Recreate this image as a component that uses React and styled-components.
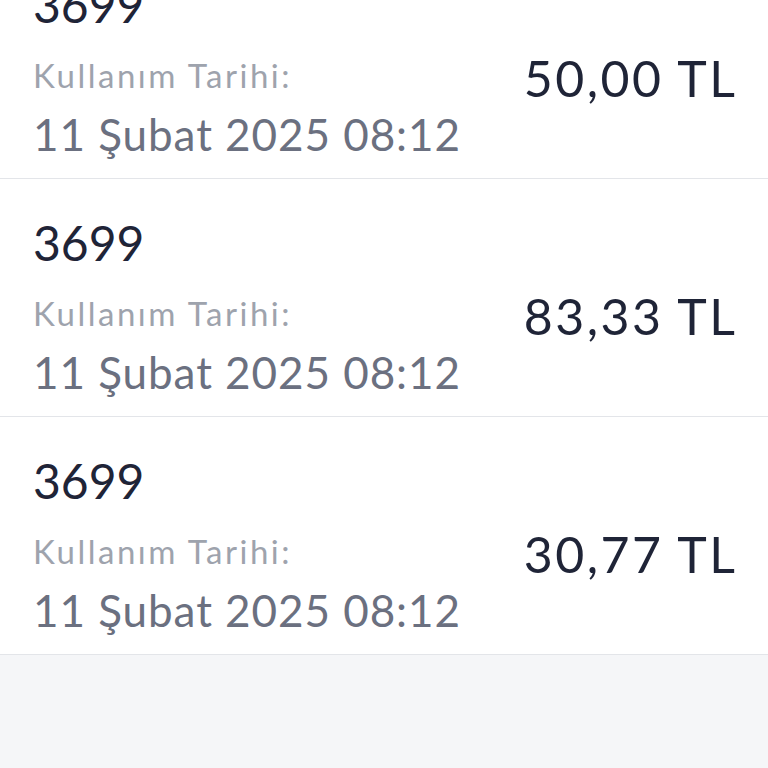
import React from 'react';
import styled, { createGlobalStyle } from 'styled-components';

const GlobalStyle = createGlobalStyle`
  html, body {
    margin: 0;
    padding: 0;
    background: #f5f6f8;
  }
  body {
    font-family: Lato, "Noto Sans", sans-serif;
    overflow: hidden;
  }
`;

const Page = styled.div`
  width: 768px;
  height: 768px;
  overflow: hidden;
  background: #f5f6f8;
`;

// the list is scrolled, the first row sits partly above the top edge
const List = styled.div`
  margin-top: -59px;
  background: #ffffff;
`;

const Item = styled.div`
  display: flex;
  align-items: center;
  justify-content: space-between;
  height: 237px;
  padding: 0 33px;
  border-bottom: 1px solid #e3e5e9;
  box-sizing: content-box;
`;

const Left = styled.div`
  display: flex;
  flex-direction: column;
  align-self: flex-start;
  padding-top: 36px;
`;

const Code = styled.div`
  font-size: 48px;
  line-height: 56px;
  color: #1f2437;
`;

const Label = styled.div`
  font-size: 33px;
  line-height: 40px;
  letter-spacing: 2.5px;
  color: #9ea3ad;
  margin-top: 22px;
`;

const DateText = styled.div`
  font-size: 44px;
  line-height: 52px;
  letter-spacing: 0.95px;
  color: #6b7080;
  margin-top: 13px;
`;

const Amount = styled.div`
  font-size: 50px;
  line-height: 60px;
  letter-spacing: 2.5px;
  margin-right: -2.5px;
  color: #1f2437;
  margin-top: 36px;
`;

const items = [
  { code: '3699', date: '11 Şubat 2025 08:12', amount: '50,00 TL' },
  { code: '3699', date: '11 Şubat 2025 08:12', amount: '83,33 TL' },
  { code: '3699', date: '11 Şubat 2025 08:12', amount: '30,77 TL' },
];

const App = () => {
  return (
    <Page>
      <GlobalStyle />
      <List>
        {items.map((item, i) => (
          <Item key={i}>
            <Left>
              <Code>{item.code}</Code>
              <Label>Kullanım Tarihi:</Label>
              <DateText>{item.date}</DateText>
            </Left>
            <Amount>{item.amount}</Amount>
          </Item>
        ))}
      </List>
    </Page>
  );
};

export default App;
